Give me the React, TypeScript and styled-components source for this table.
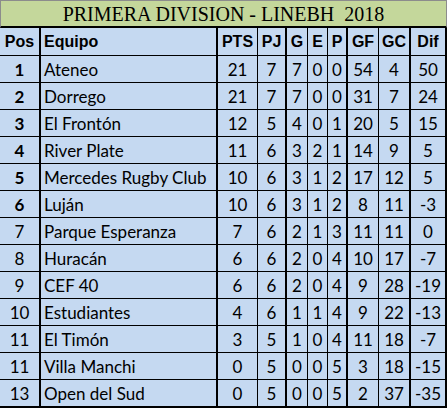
import styled, { createGlobalStyle, css } from "styled-components";

const GlobalStyle = createGlobalStyle`
    html, body {
        margin: 0;
        padding: 0;
        background: #ffffff;
    }
    * {
        box-sizing: border-box;
    }
`;

// column widths include each cell's right border
const COLS = "41px 177px 40px 29px 21px 20px 20px 31px 32px 36px";
const THICK = [true, true, false, true, false, false, true, false, true, true];

const Sheet = styled.div`
    width: 447px;
    display: flex;
    flex-direction: column;
`;

const Title = styled.div`
    height: 28px;
    background: #c4d79b;
    border: 1px solid #8c8c8c;
    border-bottom: 2px solid #000;
    display: flex;
    align-items: center;
    justify-content: center;
    font-family: "Liberation Serif", "Times New Roman", serif;
    font-size: 20px;
    color: #000;
    white-space: pre;
    padding-top: 1px;
`;

const Row = styled.div<{ $last?: boolean; $head?: boolean }>`
    display: grid;
    grid-template-columns: ${COLS};
    height: ${(p) => (p.$head ? 28 : p.$last ? 28 : 27)}px;
    background: #c5d9f1;
    border-bottom: ${(p) => (p.$last ? 2 : 1)}px solid #000;
`;

const Cell = styled.div<{ $thick: boolean; $left?: boolean; $bold?: boolean; $head?: boolean }>`
    display: flex;
    align-items: center;
    justify-content: ${(p) => (p.$left ? "flex-start" : "center")};
    padding-left: ${(p) => (p.$left ? "3px" : "0")};
    border-right: ${(p) => (p.$thick ? 2 : 1)}px solid #000;
    color: #000;
    white-space: nowrap;
    overflow: hidden;
    ${(p) =>
        p.$head
            ? css`
                  font-family: "Liberation Sans", Arial, sans-serif;
                  font-weight: 700;
                  font-size: 16px;
              `
            : css`
                  font-family: Lato, "Open Sans", sans-serif;
                  font-weight: ${p.$bold ? 700 : 400};
                  font-size: 17px;
              `}
`;

const HEAD = ["Pos", "Equipo", "PTS", "PJ", "G", "E", "P", "GF", "GC", "Dif"];

const TEAMS: (string | number)[][] = [
    [1, "Ateneo", 21, 7, 7, 0, 0, 54, 4, 50],
    [2, "Dorrego", 21, 7, 7, 0, 0, 31, 7, 24],
    [3, "El Frontón", 12, 5, 4, 0, 1, 20, 5, 15],
    [4, "River Plate", 11, 6, 3, 2, 1, 14, 9, 5],
    [5, "Mercedes Rugby Club", 10, 6, 3, 1, 2, 17, 12, 5],
    [6, "Luján", 10, 6, 3, 1, 2, 8, 11, -3],
    [7, "Parque Esperanza", 7, 6, 2, 1, 3, 11, 11, 0],
    [8, "Huracán", 6, 6, 2, 0, 4, 10, 17, -7],
    [9, "CEF 40", 6, 6, 2, 0, 4, 9, 28, -19],
    [10, "Estudiantes", 4, 6, 1, 1, 4, 9, 22, -13],
    [11, "El Timón", 3, 5, 1, 0, 4, 11, 18, -7],
    [11, "Villa Manchi", 0, 5, 0, 0, 5, 3, 18, -15],
    [13, "Open del Sud", 0, 5, 0, 0, 5, 2, 37, -35],
];

function App() {
    return (
        <Sheet>
            <GlobalStyle />
            <Title>PRIMERA DIVISION - LINEBH  2018</Title>
            <Row $head>
                {HEAD.map((h, i) => (
                    <Cell key={h} $head $thick={THICK[i]} $left={i === 1}>
                        {h}
                    </Cell>
                ))}
            </Row>
            {TEAMS.map((team, r) => (
                <Row key={r} $last={r === TEAMS.length - 1}>
                    {team.map((v, i) => (
                        <Cell key={i} $thick={THICK[i]} $left={i === 1} $bold={i === 0 && r < 6}>
                            {v}
                        </Cell>
                    ))}
                </Row>
            ))}
        </Sheet>
    );
}

export default App;
